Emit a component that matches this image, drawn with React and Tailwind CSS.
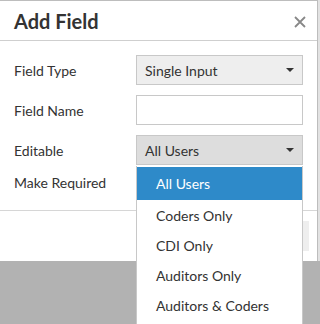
const editOptions = ["All Users", "Coders Only", "CDI Only", "Auditors Only", "Auditors & Coders"];

const Caret = () => (
  <span className="w-0 h-0 border-l-[4px] border-r-[4px] border-t-[4px] border-l-transparent border-r-transparent border-t-[#333]" />
);

const SelectBox = ({ value, active }) => (
  <div
    className={`w-[167px] h-[30px] border border-[#c8c8c8] flex items-center justify-between pl-[8px] pr-[8px] text-[14px] text-[#333] ${
      active ? "bg-[#dddddd]" : "bg-[#eeeeee]"
    }`}
  >
    <span>{value}</span>
    <Caret />
  </div>
);

const Row = ({ label, children, h = "h-[30px]" }) => (
  <div className={`flex items-center ${h}`}>
    <div className="w-[122px] text-[14px] text-[#333]">{label}</div>
    {children}
  </div>
);

export default function App() {
  return (
    <div className="w-[320px] h-[324px] bg-[#b2b2b2] relative overflow-hidden font-['Lato',sans-serif]">
      <div className="flex h-[261px]">
        <div className="w-[318px] bg-white border-t border-r border-[#bdbdbd] flex flex-col">
          {/* header */}
          <div className="h-[40px] border-b border-[#cfcfcf] flex items-center justify-between pl-[14px] pr-[11px]">
            <h2 className="text-[20px] font-bold text-[#333] leading-none">Add Field</h2>
            <svg width="12" height="12" viewBox="0 0 12 12" className="mt-[3px]">
              <path d="M1 1L11 11M11 1L1 11" stroke="#888" strokeWidth="1.8" />
            </svg>
          </div>

          {/* body */}
          <div className="pt-[14px] pb-[21px] pl-[14px] flex flex-col gap-[10px]">
            <Row label="Field Type">
              <SelectBox value="Single Input" />
            </Row>
            <Row label="Field Name">
              <div className="w-[167px] h-[30px] border border-[#c8c8c8] bg-white" />
            </Row>
            <Row label="Editable">
              <SelectBox value="All Users" active />
            </Row>
            <Row label="Make Required" h="h-[14px]" />
          </div>

          {/* footer */}
          <div className="border-t border-[#d6d6d6] flex justify-end pt-[10px] pb-[10px] pr-[8px]">
            <div className="w-[70px] h-[30px] bg-[#eeeeee]" />
          </div>
        </div>
        <div className="flex-1 bg-[#e2e2e2]" />
      </div>

      {/* open dropdown menu */}
      <ul className="absolute left-[136px] top-[166px] w-[167px] h-[170px] bg-white border-l border-r border-[#c8c8c8] pt-[1px] text-[14px]">
        {editOptions.map((opt, i) => (
          <li
            key={opt}
            className={`flex items-center pl-[19px] ${
              i === 0 ? "h-[33px] bg-[#2e8ac9] text-white" : "h-[30px] text-[#333]"
            }`}
          >
            {opt}
          </li>
        ))}
      </ul>
    </div>
  );
}
